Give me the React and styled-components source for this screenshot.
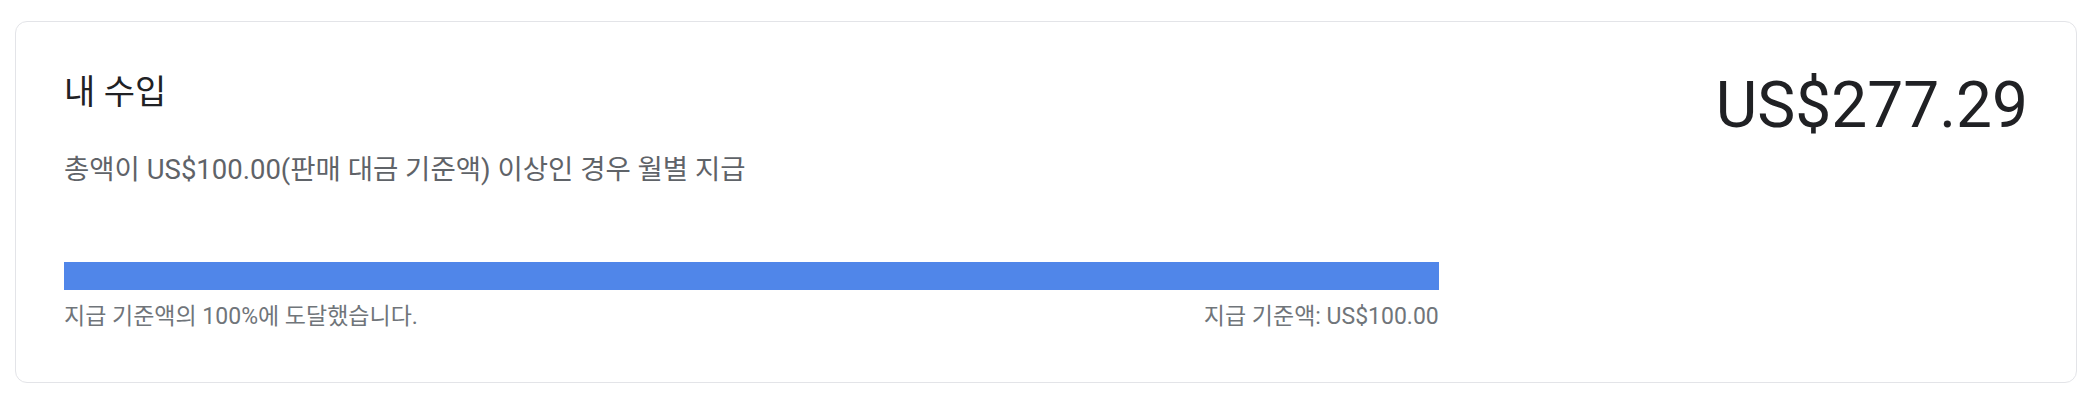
import React from "react";
import styled, { createGlobalStyle } from "styled-components";

const Global = createGlobalStyle`
  html, body { margin: 0; padding: 0; background: #ffffff; }
  body { font-family: Roboto, "Noto Sans CJK KR", sans-serif; }
`;

const Page = styled.div`
  padding: 21px 15px 19px 15px;
`;

const Card = styled.section`
  box-sizing: border-box;
  height: 362px;
  border: 1px solid #e3e4e8;
  border-radius: 12px;
  padding: 48px 48px 0 48px;
  display: flex;
  justify-content: space-between;
  align-items: flex-start;
`;

const Left = styled.div`
  width: 70%;
  display: flex;
  flex-direction: column;
`;

const Title = styled.h2`
  margin: 2px 0 0 0;
  font-size: 34px;
  line-height: 40px;
  font-weight: 400;
  color: #202124;
`;

const Subtitle = styled.p`
  margin: 38px 0 0 0;
  font-size: 27.5px;
  line-height: 40px;
  color: #5f6368;
`;

const Bar = styled.div`
  margin-top: 72px;
  height: 28px;
  background: #e8eaed;
  overflow: hidden;
`;

const Fill = styled.div`
  height: 100%;
  background: #5086e9;
`;

const Footer = styled.div`
  margin-top: 12px;
  display: flex;
  justify-content: space-between;
  font-size: 23px;
  line-height: 30px;
  color: #70757a;
`;

const Amount = styled.div`
  font-size: 64px;
  line-height: 64px;
  color: #202124;
  margin-top: 4px;
`;

export default function App() {
  const percent = 100;
  return (
    <>
      <Global />
      <Page>
        <Card>
          <Left>
            <Title>내 수입</Title>
            <Subtitle>총액이 US$100.00(판매 대금 기준액) 이상인 경우 월별 지급</Subtitle>
            <Bar>
              <Fill style={{ width: `${percent}%` }} />
            </Bar>
            <Footer>
              <span>지급 기준액의 100%에 도달했습니다.</span>
              <span>지급 기준액: US$100.00</span>
            </Footer>
          </Left>
          <Amount>US$277.29</Amount>
        </Card>
      </Page>
    </>
  );
}
